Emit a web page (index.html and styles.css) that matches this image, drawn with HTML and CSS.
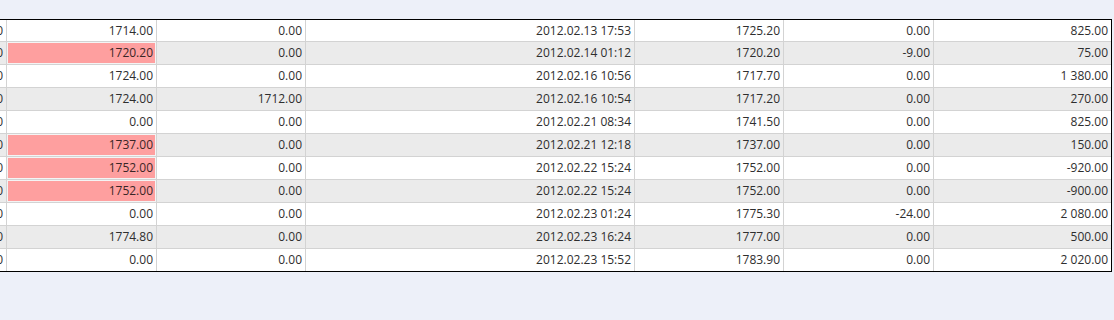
FILE: index.html
```html
<!DOCTYPE html>
<html>
<head>
<meta charset="utf-8">
<link rel="stylesheet" href="styles.css">
</head>
<body>
<div class="wrap">
<table class="grid">
<colgroup>
<col class="c0"><col class="c1"><col class="c2"><col class="c3"><col class="c4"><col class="c5"><col class="c6">
</colgroup>
<tbody>
<tr class="odd"><td>0.00</td><td>1714.00</td><td>0.00</td><td>2012.02.13 17:53</td><td>1725.20</td><td>0.00</td><td>825.00</td></tr>
<tr class="even"><td>0.00</td><td class="hl">1720.20</td><td>0.00</td><td>2012.02.14 01:12</td><td>1720.20</td><td>-9.00</td><td>75.00</td></tr>
<tr class="odd"><td>0.00</td><td>1724.00</td><td>0.00</td><td>2012.02.16 10:56</td><td>1717.70</td><td>0.00</td><td>1 380.00</td></tr>
<tr class="even"><td>0.00</td><td>1724.00</td><td>1712.00</td><td>2012.02.16 10:54</td><td>1717.20</td><td>0.00</td><td>270.00</td></tr>
<tr class="odd"><td>0.00</td><td>0.00</td><td>0.00</td><td>2012.02.21 08:34</td><td>1741.50</td><td>0.00</td><td>825.00</td></tr>
<tr class="even"><td>0.00</td><td class="hl">1737.00</td><td>0.00</td><td>2012.02.21 12:18</td><td>1737.00</td><td>0.00</td><td>150.00</td></tr>
<tr class="odd"><td>0.00</td><td class="hl">1752.00</td><td>0.00</td><td>2012.02.22 15:24</td><td>1752.00</td><td>0.00</td><td>-920.00</td></tr>
<tr class="even"><td>0.00</td><td class="hl">1752.00</td><td>0.00</td><td>2012.02.22 15:24</td><td>1752.00</td><td>0.00</td><td>-900.00</td></tr>
<tr class="odd"><td>0.00</td><td>0.00</td><td>0.00</td><td>2012.02.23 01:24</td><td>1775.30</td><td>-24.00</td><td>2 080.00</td></tr>
<tr class="even"><td>0.00</td><td>1774.80</td><td>0.00</td><td>2012.02.23 16:24</td><td>1777.00</td><td>0.00</td><td>500.00</td></tr>
<tr class="odd"><td>0.00</td><td>0.00</td><td>0.00</td><td>2012.02.23 15:52</td><td>1783.90</td><td>0.00</td><td>2 020.00</td></tr>
</tbody>
</table>
</div>
</body>
</html>
```

FILE: styles.css
```css
html, body {
  margin: 0;
  padding: 0;
  background: #edf0f9;
  overflow: hidden;
}
.wrap {
  padding-top: 19px;
  overflow: hidden;
}
.grid {
  margin-left: -53px;
  width: 1165px;
  table-layout: fixed;
  border-collapse: separate;
  border-spacing: 0;
  border-top: 1px solid #000;
  border-bottom: 1px solid #000;
  border-right: 1px solid #000;
  font-family: "Open Sans", "Liberation Sans", sans-serif;
  font-size: 12px;
  color: #2e2e2e;
}
.c0 { width: 60px; }
.c1 { width: 150px; }
.c2 { width: 149px; }
.c3 { width: 329px; }
.c4 { width: 149px; }
.c5 { width: 150px; }
.c6 { width: 177px; }
.grid td {
  height: 23px;
  padding: 0 3px 0 0;
  text-align: right;
  vertical-align: middle;
  line-height: 14px;
  white-space: nowrap;
  overflow: hidden;
  border-right: 1px solid #d3d3d3;
  border-bottom: 1px solid #d3d3d3;
  box-sizing: border-box;
}
.grid tr:first-child td { height: 22px; }
.grid td:last-child { border-right: none; }
.grid tr:last-child td { border-bottom: none; height: 22px; }
.odd { background: #ffffff; }
.even { background: #ebebeb; }
.grid td.hl {
  background: #fe9f9f;
  box-shadow: inset 0 0 0 1px #f4f4f4;
  color: #3a2626;
}
```
